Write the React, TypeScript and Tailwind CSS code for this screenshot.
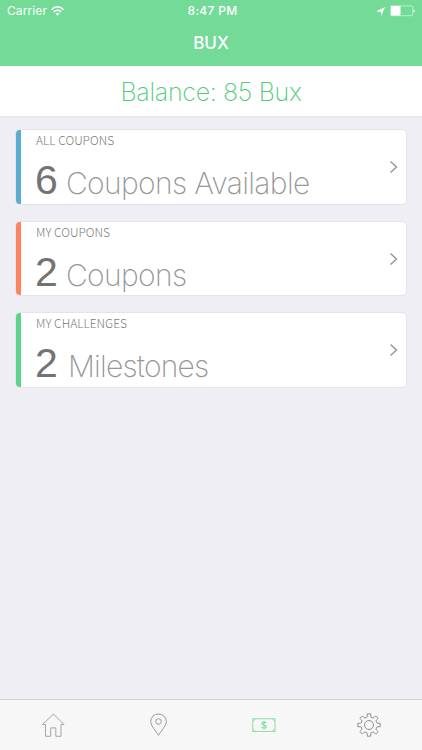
const cards = [
  { id: 'all', label: 'ALL COUPONS', count: 6, text: 'Coupons Available', bar: 'bg-[#5aadcf]', textStyle: 'ml-[7px] tracking-[-0.65px]' },
  { id: 'mine', label: 'MY COUPONS', count: 2, text: 'Coupons', bar: 'bg-[#fb8560]', textStyle: 'ml-[7px] tracking-[-0.65px]' },
  { id: 'challenges', label: 'MY CHALLENGES', count: 2, text: 'Milestones', bar: 'bg-[#5bd38a]', textStyle: 'ml-[9px] tracking-[-0.8px]' },
]

// Outline of an eight-toothed gear centred on 12,12
const gearPath = () => {
  const points: string[] = []
  const steps = [
    [-15, 8.1],
    [-11, 8.9],
    [-9, 11.3],
    [9, 11.3],
    [11, 8.9],
    [15, 8.1],
  ]
  for (let tooth = 0; tooth < 8; tooth++) {
    steps.forEach(([offset, radius]) => {
      const angle = ((tooth * 45 + offset) * Math.PI) / 180
      points.push(`${(12 + radius * Math.sin(angle)).toFixed(2)} ${(12 - radius * Math.cos(angle)).toFixed(2)}`)
    })
  }
  return `M${points.join('L')}Z`
}

function StatusBar() {
  return (
    <div className="grid h-[22px] grid-cols-3 items-center px-[7px] text-[12px] text-white">
      <div className="flex items-center gap-[4px]">
        <span className="tracking-[0.1px]">Carrier</span>
        <svg width="13" height="10" viewBox="0 0 13 10" fill="none" stroke="white" strokeWidth="1.5">
          <path d="M.6 3.7C4-.2 9-.2 12.4 3.7" />
          <path d="M2.7 5.9c2.2-2.3 5.4-2.3 7.6 0" />
          <path d="M6.5 9.7 4.4 7.6c1.2-1.2 3-1.2 4.2 0Z" fill="white" stroke="none" />
        </svg>
      </div>
      <span className="pl-[3px] text-center font-medium tracking-[0.3px]">8:47 PM</span>
      <div className="flex items-center justify-end">
        <svg width="9" height="9" viewBox="0 0 9 9" fill="white">
          <path d="M9 0 5.2 9V4.8L0 4.5Z" />
        </svg>
        <svg className="ml-[5px] -mr-px" width="26" height="12" viewBox="0 0 26 12" fill="none">
          <rect x=".8" y=".9" width="22" height="9.8" rx="1" stroke="white" strokeOpacity=".65" strokeWidth=".8" />
          <rect x="1" y="1" width="9.5" height="9.5" rx=".6" fill="white" />
          <path d="M23.6 4.2c1.5.3 1.5 3 0 3.3Z" fill="white" />
        </svg>
      </div>
    </div>
  )
}

function TabBar() {
  return (
    <nav className="grid h-[51px] grid-cols-4 items-center justify-items-center border-t border-[#cfcfd2] bg-[#f7f7f8]">
      <svg width="24" height="24" viewBox="0 0 24 24" fill="none" stroke="#a5a5a5" strokeWidth="1">
        <path d="M12.5 1 1.5 11.5h3v11.8h5.2v-8.4h5.1v8.4H20V11.5h3Z" />
      </svg>
      <svg width="24" height="24" viewBox="0 0 24 24" fill="none" stroke="#999999" strokeWidth="1">
        <path d="M12.5 22.3C10.5 18.5 4.7 13 4.7 8.4a7.8 7.4 0 0 1 15.6 0C20.3 13 14.5 18.5 12.5 22.3Z" />
        <circle cx="12.5" cy="8.5" r="2.8" />
      </svg>
      <svg width="24" height="24" viewBox="0 0 24 24" fill="none" stroke="#7edc9f" strokeWidth=".9">
        <rect x=".8" y="5.8" width="22.2" height="12.6" />
        <path d="M2.8 5.8c0 1.2-.8 2-2 2M21 5.8c0 1.2.8 2 2 2M2.8 18.4c0-1.2-.8-2-2-2M21 18.4c0-1.2.8-2 2-2" />
        <path d="M14.1 10.2c-.4-1.4-4.2-1.5-4.2.4 0 2.1 4.4 1.2 4.4 3.2 0 2-4.2 1.9-4.7.1M12 7.9v8.3" strokeWidth="1.1" />
      </svg>
      <svg width="24" height="24" viewBox="0 0 24 24" fill="none" stroke="#8f8f8f" strokeWidth="1" strokeLinejoin="round">
        <path d={gearPath()} />
        <circle cx="12" cy="12" r="4.5" />
      </svg>
    </nav>
  )
}

export default function App() {
  return (
    <div className="flex h-[750px] w-[422px] flex-col overflow-hidden bg-[#efeef4] font-[Inter,'Liberation_Sans',sans-serif]">
      <header className="h-[66px] shrink-0 bg-[#73da98]">
        <StatusBar />
        <h1 className="text-center text-[17px] leading-[43px] font-medium text-white">BUX</h1>
      </header>

      {/* Balance */}
      <div className="h-[50px] shrink-0 bg-white text-center text-[25px] leading-[52px] font-extralight tracking-[-0.3px] text-[#50cb7c] shadow-[0_1px_2px_rgba(0,0,0,0.05)]">
        Balance: 85 Bux
      </div>

      {/* Cards */}
      <main className="flex flex-1 flex-col gap-4 px-[15px] pt-[13px]">
        {cards.map(card => (
          <section key={card.id} className="flex h-[75.7px] overflow-hidden rounded-[5px] border border-[#e4e3e9] bg-white">
            <div className={`w-[5px] shrink-0 ${card.bar}`} />
            <div className="flex-1 pl-[15px] whitespace-nowrap">
              <p className="h-[21px] font-['Noto_Sans_CJK_SC',sans-serif] text-[12px] leading-[19px] font-light text-[#7c7c7c]">{card.label}</p>
              <div className="flex items-baseline leading-[59px]">
                <span className="-ml-[1px] w-[24px] font-['Liberation_Sans',sans-serif] text-[41px] text-[#737373]">{card.count}</span>
                <span className={`text-[30px] font-extralight text-[#979797] ${card.textStyle}`}>{card.text}</span>
              </div>
            </div>
            <svg className="mr-[7px] self-center" width="10" height="14" viewBox="0 0 10 14" fill="none" stroke="#949494" strokeWidth="1.4">
              <path d="m1.5 1.5 6 5.5-6 5.5" />
            </svg>
          </section>
        ))}
      </main>

      <TabBar />
    </div>
  )
}
